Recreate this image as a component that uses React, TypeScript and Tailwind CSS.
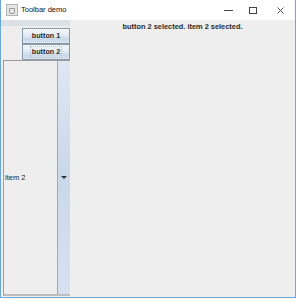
import React from "react";

const grip =
  "bg-[repeating-conic-gradient(#c8d2dc_0%_25%,#eeeeee_0%_50%)] bg-[length:2px_2px]";

function MetalButton({ label, focused }: { label: string; focused?: boolean }) {
  return (
    <div className="w-[48px] h-[16px] border border-[#8a9aab] bg-[linear-gradient(to_bottom,#f4f7fa_0%,#e4ecf4_40%,#c9d8e8_75%,#dbe5ef_100%)] flex items-center justify-center">
      <span
        className={
          "text-[7.2px] font-bold text-[#2b2b2b] leading-none px-[1px] py-[1px] " +
          (focused ? "outline outline-1 outline-dotted outline-[#b8c6d4]" : "")
        }
      >
        {label}
      </span>
    </div>
  );
}

export default function App() {
  return (
    <div className="w-[296px] h-[300px] bg-white" style={{ fontFamily: '"Liberation Sans", Arial, sans-serif' }}>
      <div className="w-[296px] h-[298px] border-x border-b border-[#6aa5dc] flex flex-col bg-[#eeeeee]">
        {/* title bar */}
        <div className="h-[20px] bg-white flex items-center shrink-0">
          <div className="ml-[5px] w-[12px] h-[12px] border border-[#b5b5b5] bg-[#e6e6e6] flex items-end justify-center">
            <div className="w-[6px] h-[6px] border border-[#9a9a9a] rounded-b-[2px] mb-[1px]" />
          </div>
          <span className="ml-[3px] text-[7.5px] text-[#111]">Toolbar demo</span>
          <div className="flex-1" />
          <div className="w-[9px] h-[1px] bg-[#444] mr-[16px]" />
          <div className="w-[8px] h-[7px] border border-[#444] mr-[20px]" />
          <svg width="7" height="7" viewBox="0 0 7 7" className="mr-[11px]">
            <path d="M0.5 0.5 L6.5 6.5 M6.5 0.5 L0.5 6.5" stroke="#555" strokeWidth="1" />
          </svg>
        </div>
        {/* content */}
        <div className="flex flex-1 min-h-0">
          <div className="w-[69px] flex flex-col">
            <div className={"h-[6px] " + grip} />
            <div className="flex flex-col items-end mt-[2px]">
              <MetalButton label="button 1" />
              <MetalButton label="button 2" focused />
            </div>
            <div className="flex-1 ml-[2px] mb-[1px] flex border-l border-t border-[#9c9c9c] border-b-2 border-b-[#bdbdbd]">
              <div className="flex-1 flex items-center border-r border-[#a8a8a8]">
                <span className="text-[7.5px] text-[#222] ml-[1px]">item 2</span>
              </div>
              <div className="w-[12px] flex items-center justify-center bg-[linear-gradient(to_bottom,#dfe8f1,#c9d8e8_50%,#d6e2ee)]">
                <svg width="6" height="4" viewBox="0 0 6 4">
                  <path d="M0 0 H6 L3 3 Z" fill="#333" />
                </svg>
              </div>
            </div>
          </div>
          <div className="flex-1 flex justify-center pt-[3px]">
            <span className="text-[7.4px] font-bold text-[#2b2b2b] leading-none">
              button 2 selected. item 2 selected.
            </span>
          </div>
        </div>
      </div>
    </div>
  );
}
